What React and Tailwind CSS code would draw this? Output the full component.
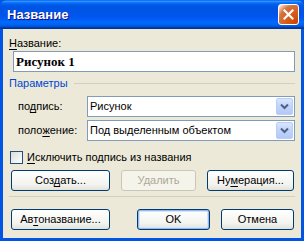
import { useState } from "react";

const font = "font-['Liberation_Sans',Arial,sans-serif]";

function U({ children }) {
  return <span className="underline underline-offset-[2px]">{children}</span>;
}

function Btn({ w, children, disabled, primary, className = "" }) {
  return (
    <button
      className={`h-[21px] ${w} rounded-[3px] border text-[11px] leading-none ${font} ${
        disabled
          ? "border-[#c9c7ba] bg-[#f5f4ea] text-[#aca899]"
          : "border-[#003c74] bg-[linear-gradient(to_bottom,#ffffff,#f3f3ef_70%,#e3e2da)] text-black"
      } ${primary ? "shadow-[inset_0_0_0_1px_#98b8ea,inset_0_0_0_2px_#cee7ff]" : ""} ${className}`}
    >
      {children}
    </button>
  );
}

function Combo({ value }) {
  return (
    <div className="flex h-[21px] w-[208px] items-center border border-[#7f9db9] bg-white pl-[2px] pr-[1px]">
      <span className={`flex-1 text-[11px] text-black ${font}`}>{value}</span>
      <div className="flex h-[17px] w-[17px] items-center justify-center rounded-[2px] border border-[#b9cdf9] bg-[linear-gradient(to_bottom,#d9e5fd,#c1d3fb_50%,#b4c8f6)]">
        <svg width="9" height="7" viewBox="0 0 9 7">
          <path d="M1 1.5 L4.5 5 L8 1.5" fill="none" stroke="#4d6185" strokeWidth="2" />
        </svg>
      </div>
    </div>
  );
}

export default function App() {
  const [excl, setExcl] = useState(false);

  return (
    <div className="flex h-[241px] w-[304px] flex-col bg-[#0055e5]">
      {/* title bar */}
      <div className="flex h-[29px] shrink-0 items-center justify-between rounded-t-[7px] bg-[linear-gradient(to_bottom,#0058ee_0%,#3593ff_4%,#288eff_6%,#127dff_8%,#036ffc_10%,#0262ee_14%,#0057e5_20%,#0054e3_24%,#0055eb_56%,#005bf5_66%,#026afe_76%,#0062ef_86%,#0052d6_92%,#0040ab_94%,#003092_100%)] pl-[7px] pr-[5px]">
        <span className={`text-[13px] font-bold text-white [text-shadow:1px_1px_#0f1089] ${font}`}>Название</span>
        <div className="flex h-[21px] w-[21px] items-center justify-center rounded-[3px] border border-white bg-[radial-gradient(circle_at_90%_90%,#cc4600_0%,#dc6527_55%,#cd7546_70%,#ffccb2_90%,#ffffff_100%)]">
          <svg width="11" height="11" viewBox="0 0 11 11">
            <path d="M1.5 1.5 L9.5 9.5 M9.5 1.5 L1.5 9.5" stroke="white" strokeWidth="2.2" strokeLinecap="square" />
          </svg>
        </div>
      </div>

      {/* body */}
      <div className={`mx-[3px] mb-[3px] flex flex-1 flex-col bg-[#ece9d8] text-[11px] text-black ${font}`}>
        <div className="ml-[6px] mt-[8px] h-[13px] leading-[13px]">
          <U>Н</U>азвание:
        </div>
        <div className="ml-[10px] mt-[1px] flex h-[21px] w-[282px] items-center border border-[#7f9db9] bg-white pl-[2px]">
          <span className="font-['Liberation_Serif','Times_New_Roman',serif] text-[13px] font-bold">Рисунок 1</span>
        </div>

        <div className="ml-[6px] mr-[6px] mt-[5px] flex h-[13px] items-center">
          <span className="leading-[13px] text-[#0046d5]">Параметры</span>
          <div className="ml-[6px] h-px flex-1 bg-[#d0d0bf]" />
        </div>

        <div className="mt-[6px] flex items-center">
          <span className="ml-[15px] w-[69px]">
            по<U>д</U>пись:
          </span>
          <Combo value="Рисунок" />
        </div>
        <div className="mt-[3px] flex items-center">
          <span className="ml-[15px] w-[69px]">
            поло<U>ж</U>ение:
          </span>
          <Combo value="Под выделенным объектом" />
        </div>

        <label className="ml-[7px] mt-[10px] flex h-[13px] items-center" onClick={() => setExcl(!excl)}>
          <span className="flex h-[13px] w-[13px] items-center justify-center border border-[#1c5180] bg-[linear-gradient(135deg,#dcdcd7,#ffffff)]">
            {excl && (
              <svg width="9" height="9" viewBox="0 0 9 9">
                <path d="M1 4 L3.5 6.5 L8 1.5" fill="none" stroke="#21a121" strokeWidth="2" />
              </svg>
            )}
          </span>
          <span className="ml-[4px] leading-[13px]">
            <U>И</U>сключить подпись из названия
          </span>
        </label>

        <div className="ml-[8px] mt-[6px] flex">
          <Btn w="w-[99px]">
            Соз<U>д</U>ать...
          </Btn>
          <Btn w="w-[75px]" disabled className="ml-[11px]">
            Удалить
          </Btn>
          <Btn w="w-[87px]" className="ml-[11px]">
            Ну<U>м</U>ерация...
          </Btn>
        </div>

        <div className="ml-[6px] mr-[6px] mt-[5px] h-px bg-[#d0d0bf]" />

        <div className="ml-[8px] mt-[12px] flex">
          <Btn w="w-[99px]">
            Ав<U>т</U>оназвание...
          </Btn>
          <Btn w="w-[73px]" primary className="ml-[27px]">
            OK
          </Btn>
          <Btn w="w-[73px]" className="ml-[11px]">
            Отмена
          </Btn>
        </div>
      </div>
    </div>
  );
}
